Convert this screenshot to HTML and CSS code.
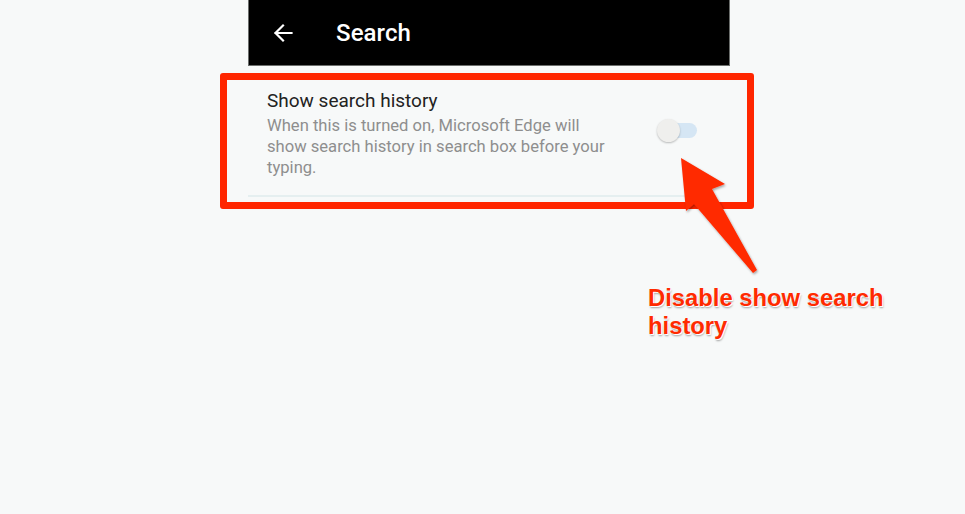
FILE: index.html
```html
<!DOCTYPE html>
<html>
<head>
<meta charset="utf-8">
<link rel="stylesheet" href="styles.css">
</head>
<body>
<div class="phone">
  <header class="appbar">
    <svg class="back" width="20" height="20" viewBox="0 0 20 20"><path d="M18.5 10H2.5M10 2.5L2.5 10L10 17.5" fill="none" stroke="#fff" stroke-width="2.2" stroke-linecap="square"/></svg>
    <h1 class="title">Search</h1>
  </header>
  <section class="setting">
    <div class="setting-text">
      <div class="setting-title">Show search history</div>
      <div class="setting-desc">When this is turned on, Microsoft Edge will show search history in search box before your typing.</div>
    </div>
    <div class="toggle"><div class="track"></div><div class="thumb"></div></div>
  </section>
  <div class="divider"></div>
</div>

<div class="highlight"></div>
<svg class="arrow" width="965" height="514" viewBox="0 0 965 514">
  <defs>
    <filter id="sh" x="-20%" y="-20%" width="140%" height="140%">
      <feDropShadow dx="1" dy="1.5" stdDeviation="1.2" flood-color="#000" flood-opacity="0.35"/>
    </filter>
  </defs>
  <polygon filter="url(#sh)" fill="#ff2a00" points="681,158 725,184 712,189 757,270 753,273 694,204 686,211"/>
</svg>
<div class="callout">Disable show search<br>history</div>
</body>
</html>
```
FILE: styles.css
```css
html, body {
  margin: 0;
  padding: 0;
  background: #f7f9f9;
  width: 965px;
  height: 514px;
  overflow: hidden;
  font-family: Roboto, "Liberation Sans", sans-serif;
}
.phone {
  width: 482px;
  margin-left: 248px;
}
.appbar {
  background: #000;
  border: 1px solid #6b6e6c;
  border-top: none;
  box-sizing: border-box;
  display: flex;
  align-items: center;
  padding-left: 24px;
  height: 66px;
}
.title {
  margin: 0 0 0 43px;
  color: #fff;
  font-size: 24px;
  font-weight: 500;
  letter-spacing: 0.1px;
}
.setting {
  display: flex;
  align-items: flex-start;
  padding: 23px 0 0 19px;
  height: 107px;
  box-sizing: border-box;
}
.setting-text {
  width: 352px;
}
.setting-title {
  font-size: 19px;
  color: #222;
  line-height: 23px;
}
.setting-desc {
  margin-top: 3px;
  font-size: 16.6px;
  line-height: 21px;
  color: #8e8e8e;
}
.toggle {
  position: relative;
  width: 40px;
  height: 24px;
  margin-left: 38px;
  margin-top: 30px;
}
.track {
  position: absolute;
  left: 3px;
  top: 4px;
  width: 37px;
  height: 15px;
  border-radius: 8px;
  background: #d5e6f4;
}
.thumb {
  position: absolute;
  left: 0;
  top: 0;
  width: 23px;
  height: 23px;
  border-radius: 50%;
  background: #efefed;
  box-shadow: 0 1px 2px rgba(0,0,0,0.25);
}
.divider {
  height: 2px;
  background: #e5eff0;
  margin-top: 22px;
  width: 462px;
}
.highlight {
  position: absolute;
  left: 220px;
  top: 73px;
  width: 534px;
  height: 136px;
  box-sizing: border-box;
  border: 7px solid #ff2600;
  border-radius: 3px;
}
.arrow {
  position: absolute;
  left: 0;
  top: 0;
}
.callout {
  position: absolute;
  left: 648px;
  top: 284px;
  font-family: "Liberation Sans", Arial, sans-serif;
  font-weight: bold;
  font-size: 23.8px;
  line-height: 28px;
  color: #ff2a00;
  text-shadow: 0 0 1px #fff, 1px 1px 0 #fff, 1px 2px 2px rgba(0,0,0,0.35);
}
```
